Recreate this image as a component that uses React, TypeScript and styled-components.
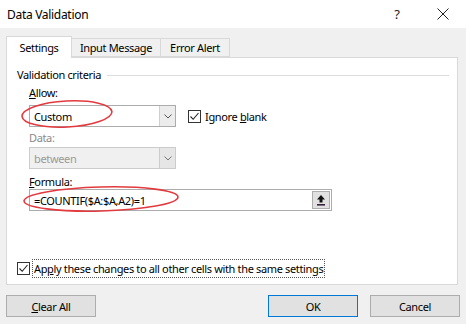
import styled, { createGlobalStyle } from 'styled-components';

const Global = createGlobalStyle`
  html, body {
    margin: 0;
    padding: 0;
    background: #f0f0f0;
  }
  body {
    font-family: "Noto Sans", "Open Sans", sans-serif;
    font-size: 11px;
    letter-spacing: -0.35px;
    color: #000;
  }
`;

const Window = styled.div`
  position: relative;
  width: 466px;
  height: 324px;
  background: #f0f0f0;
  overflow: hidden;
  display: flex;
  flex-direction: column;
`;

const TitleBar = styled.div`
  height: 28px;
  background: #fff;
  display: flex;
  align-items: center;
  padding-left: 7px;
`;

const Title = styled.div`
  flex: 1;
  font-size: 12px;
  letter-spacing: -0.3px;
`;

const TitleButton = styled.div`
  width: 46px;
  height: 28px;
  display: flex;
  align-items: center;
  justify-content: center;
  font-size: 13px;
  color: #222;
`;

const Body = styled.div`
  padding: 8px 6px 0 6px;
  display: flex;
  flex-direction: column;
`;

const Tabs = styled.div`
  display: flex;
  align-items: flex-end;
  height: 21px;
  position: relative;
  z-index: 1;
`;

const Tab = styled.div<{ $active?: boolean; $w: number }>`
  width: ${(p) => p.$w}px;
  box-sizing: border-box;
  height: ${(p) => (p.$active ? 22 : 19)}px;
  margin-bottom: ${(p) => (p.$active ? -1 : 0)}px;
  background: ${(p) => (p.$active ? '#fff' : '#f0f0f0')};
  border: 1px solid #d9d9d9;
  border-bottom: ${(p) => (p.$active ? 'none' : '1px solid #d9d9d9')};
  border-left: ${(p) => (p.$active ? '1px solid #d9d9d9' : 'none')};
  display: flex;
  align-items: center;
  justify-content: center;
  padding-bottom: ${(p) => (p.$active ? 1 : 0)}px;
`;

const Panel = styled.div`
  width: 452px;
  height: 228px;
  box-sizing: border-box;
  background: #fff;
  border: 1px solid #d9d9d9;
  padding: 10px 8px 0 10px;
  display: flex;
  flex-direction: column;
`;

const GroupHeader = styled.div`
  display: flex;
  align-items: center;
  gap: 6px;
  height: 14px;
  line-height: 14px;
  &::after {
    content: '';
    flex: 1;
    height: 1px;
    background: #dcdcdc;
  }
`;

const Criteria = styled.div`
  margin-left: 12px;
  display: flex;
  flex-direction: column;
`;

const Label = styled.div<{ $gap: number; $disabled?: boolean }>`
  margin-top: ${(p) => p.$gap}px;
  height: 14px;
  line-height: 14px;
  color: ${(p) => (p.$disabled ? '#8a8a8a' : '#000')};
`;

const Key = styled.span`
  text-decoration: underline;
  text-underline-offset: 1px;
`;

const Row = styled.div<{ $gap: number }>`
  margin-top: ${(p) => p.$gap}px;
  display: flex;
  align-items: center;
  gap: 12px;
`;

const Combo = styled.div<{ $disabled?: boolean }>`
  width: 147px;
  height: 22px;
  box-sizing: border-box;
  border: 1px solid ${(p) => (p.$disabled ? '#cccccc' : '#acacac')};
  background: ${(p) => (p.$disabled ? '#f0f0f0' : '#fff')};
  color: ${(p) => (p.$disabled ? '#9a9a9a' : '#000')};
  display: flex;
  align-items: center;
  padding-left: 4px;
`;

const ComboText = styled.div`
  flex: 1;
`;

const ComboButton = styled.div<{ $disabled?: boolean }>`
  width: 16px;
  height: 20px;
  box-sizing: border-box;
  border-left: 1px solid ${(p) => (p.$disabled ? '#cccccc' : '#cfcfcf')};
  background: ${(p) => (p.$disabled ? '#e6e6e6' : '#ececec')};
  display: flex;
  align-items: center;
  justify-content: center;
`;

const CheckWrap = styled.div`
  display: flex;
  align-items: center;
  gap: 4px;
`;

const Box = styled.div`
  width: 13px;
  height: 13px;
  box-sizing: border-box;
  border: 1px solid #333;
  background: #fff;
  display: flex;
  align-items: center;
  justify-content: center;
`;

const FocusText = styled.span`
  outline: 1px dotted #555;
  padding: 1px 1px;
`;

const FormulaInput = styled.div`
  width: 303px;
  height: 22px;
  box-sizing: border-box;
  border: 1px solid #acacac;
  background: #fff;
  display: flex;
  align-items: center;
  padding-left: 4px;
  padding-right: 1px;
`;

const RefButton = styled.div`
  width: 18px;
  height: 18px;
  box-sizing: border-box;
  border: 1px solid #adadad;
  background: #e1e1e1;
  display: flex;
  align-items: center;
  justify-content: center;
`;

const ApplyRow = styled.div`
  margin-top: auto;
  margin-bottom: 7px;
  display: flex;
  align-items: center;
  gap: 3px;
`;

const Footer = styled.div`
  display: flex;
  padding-top: 10px;
  gap: 12px;
`;

const Button = styled.div<{ $primary?: boolean }>`
  width: 90px;
  height: 22px;
  box-sizing: border-box;
  border: 1px solid ${(p) => (p.$primary ? '#0078d7' : '#adadad')};
  background: #e1e1e1;
  display: flex;
  align-items: center;
  justify-content: center;
`;

const Spacer = styled.div`
  flex: 1;
`;

const Annotations = styled.svg`
  position: absolute;
  left: 0;
  top: 0;
  pointer-events: none;
`;

const Chevron = ({ color }: { color: string }) => (
  <svg width="8" height="5" viewBox="0 0 8 5">
    <path d="M0.5 0.5 L4 4 L7.5 0.5" fill="none" stroke={color} strokeWidth="1" />
  </svg>
);

const Check = () => (
  <svg width="11" height="11" viewBox="0 0 11 11">
    <path d="M1.5 5.5 L4.2 8.3 L9.5 2" fill="none" stroke="#222" strokeWidth="1.1" />
  </svg>
);

export default function App() {
  return (
    <>
      <Global />
      <Window>
        <TitleBar>
          <Title>Data Validation</Title>
          <TitleButton>?</TitleButton>
          <TitleButton>
            <svg width="12" height="12" viewBox="0 0 12 12">
              <path d="M0.5 0.5 L11.5 11.5 M11.5 0.5 L0.5 11.5" stroke="#222" strokeWidth="1" />
            </svg>
          </TitleButton>
        </TitleBar>
        <Body>
          <Tabs>
            <Tab $active $w={66}>Settings</Tab>
            <Tab $w={89}>Input Message</Tab>
            <Tab $w={69}>Error Alert</Tab>
          </Tabs>
          <Panel>
            <GroupHeader>Validation criteria</GroupHeader>
            <Criteria>
              <Label $gap={4}>
                <Key>A</Key>llow:
              </Label>
              <Row $gap={5}>
                <Combo>
                  <ComboText>Custom</ComboText>
                  <ComboButton>
                    <Chevron color="#555" />
                  </ComboButton>
                </Combo>
                <CheckWrap>
                  <Box>
                    <Check />
                  </Box>
                  <span>
                    Ignore <Key>b</Key>lank
                  </span>
                </CheckWrap>
              </Row>
              <Label $gap={4} $disabled>
                Data:
              </Label>
              <Row $gap={2}>
                <Combo $disabled>
                  <ComboText>between</ComboText>
                  <ComboButton $disabled>
                    <Chevron color="#777" />
                  </ComboButton>
                </Combo>
              </Row>
              <Label $gap={6}>
                <Key>F</Key>ormula:
              </Label>
              <Row $gap={0}>
                <FormulaInput>
                  <ComboText>=COUNTIF($A:$A,A2)=1</ComboText>
                  <RefButton>
                    <svg width="10" height="12" viewBox="0 0 10 12">
                      <path d="M5 1 L1 5.5 H3.5 V8.5 H6.5 V5.5 H9 Z" fill="#111" />
                      <rect x="1" y="10" width="8" height="1.6" fill="#3a2340" />
                    </svg>
                  </RefButton>
                </FormulaInput>
              </Row>
            </Criteria>
            <ApplyRow>
              <Box>
                <Check />
              </Box>
              <FocusText>
                Ap<Key>p</Key>ly these changes to all other cells with the same settings
              </FocusText>
            </ApplyRow>
          </Panel>
          <Footer>
            <Button>
              <span>
                <Key>C</Key>lear All
              </span>
            </Button>
            <Spacer />
            <Button $primary>OK</Button>
            <Button>Cancel</Button>
          </Footer>
        </Body>
        <Annotations width="466" height="324" viewBox="0 0 466 324">
          <ellipse
            cx="67"
            cy="114"
            rx="45"
            ry="13"
            transform="rotate(-3 67 114)"
            fill="none"
            stroke="#e23a3f"
            strokeWidth="1.6"
          />
          <ellipse
            cx="101"
            cy="199"
            rx="77"
            ry="12"
            transform="rotate(-1.5 101 199)"
            fill="none"
            stroke="#e23a3f"
            strokeWidth="1.6"
          />
        </Annotations>
      </Window>
    </>
  );
}
